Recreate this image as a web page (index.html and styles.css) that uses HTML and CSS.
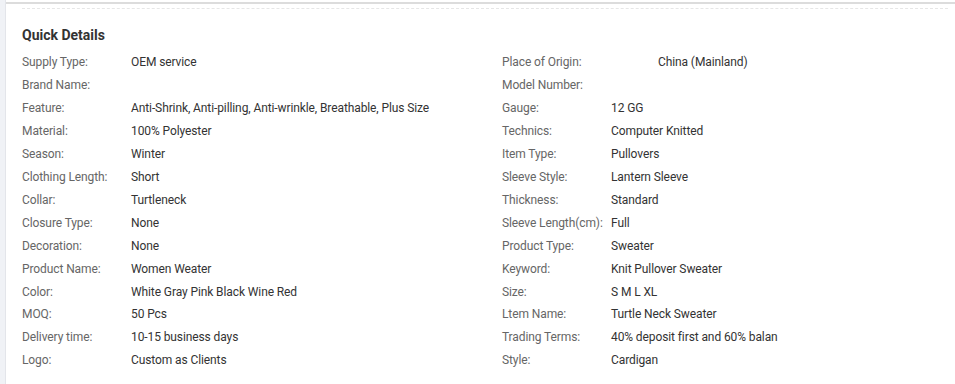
FILE: index.html
```html
<!DOCTYPE html>
<html>
<head>
<meta charset="utf-8">
<link rel="stylesheet" href="styles.css">
</head>
<body>
<div class="panel">
  <div class="topbar"></div>
  <div class="content">
    <div class="dash"></div>
    <h2 class="title">Quick Details</h2>
    <div class="grid">
      <div class="col">
        <div class="row"><span class="lbl">Supply Type:</span><span class="val">OEM service</span></div>
        <div class="row"><span class="lbl">Brand Name:</span><span class="val"></span></div>
        <div class="row"><span class="lbl">Feature:</span><span class="val">Anti-Shrink, Anti-pilling, Anti-wrinkle, Breathable, Plus Size</span></div>
        <div class="row"><span class="lbl">Material:</span><span class="val">100% Polyester</span></div>
        <div class="row"><span class="lbl">Season:</span><span class="val">Winter</span></div>
        <div class="row"><span class="lbl">Clothing Length:</span><span class="val">Short</span></div>
        <div class="row"><span class="lbl">Collar:</span><span class="val">Turtleneck</span></div>
        <div class="row"><span class="lbl">Closure Type:</span><span class="val">None</span></div>
        <div class="row"><span class="lbl">Decoration:</span><span class="val">None</span></div>
        <div class="row"><span class="lbl">Product Name:</span><span class="val">Women Weater</span></div>
        <div class="row"><span class="lbl">Color:</span><span class="val">White Gray Pink Black Wine Red</span></div>
        <div class="row"><span class="lbl">MOQ:</span><span class="val">50 Pcs</span></div>
        <div class="row"><span class="lbl">Delivery time:</span><span class="val">10-15 business days</span></div>
        <div class="row"><span class="lbl">Logo:</span><span class="val">Custom as Clients</span></div>
      </div>
      <div class="col">
        <div class="row"><span class="lbl">Place of Origin:</span><span class="val shift">China (Mainland)</span></div>
        <div class="row"><span class="lbl">Model Number:</span><span class="val"></span></div>
        <div class="row"><span class="lbl">Gauge:</span><span class="val">12 GG</span></div>
        <div class="row"><span class="lbl">Technics:</span><span class="val">Computer Knitted</span></div>
        <div class="row"><span class="lbl">Item Type:</span><span class="val">Pullovers</span></div>
        <div class="row"><span class="lbl">Sleeve Style:</span><span class="val">Lantern Sleeve</span></div>
        <div class="row"><span class="lbl">Thickness:</span><span class="val">Standard</span></div>
        <div class="row"><span class="lbl">Sleeve Length(cm):</span><span class="val">Full</span></div>
        <div class="row"><span class="lbl">Product Type:</span><span class="val">Sweater</span></div>
        <div class="row"><span class="lbl">Keyword:</span><span class="val">Knit Pullover Sweater</span></div>
        <div class="row"><span class="lbl">Size:</span><span class="val">S M L XL</span></div>
        <div class="row"><span class="lbl">Ltem Name:</span><span class="val">Turtle Neck Sweater</span></div>
        <div class="row"><span class="lbl">Trading Terms:</span><span class="val">40% deposit first and 60% balan</span></div>
        <div class="row"><span class="lbl">Style:</span><span class="val">Cardigan</span></div>
      </div>
    </div>
  </div>
</div>
</body>
</html>
```
FILE: styles.css
```css
html, body {
  margin: 0;
  padding: 0;
  height: 100%;
}
body {
  background: #f0f2f6;
  font-family: Roboto, "Liberation Sans", Arial, sans-serif;
  font-size: 12px;
}
.panel {
  margin-left: 5px;
  min-height: 384px;
  background: #fff;
  border-left: 1px solid #e3e5ea;
  padding-top: 2px;
}
.topbar {
  height: 2px;
  background: #dcdcdc;
}
.content {
  padding: 4px 7px 0 16px;
}
.dash {
  height: 0;
  border-top: 1px dashed #e6e6e6;
}
.title {
  margin: 18px 0 8px 0;
  font-size: 14px;
  font-weight: bold;
  color: #333;
  line-height: 16px;
}
.grid {
  display: grid;
  grid-template-columns: 480px 1fr;
}
.row {
  display: flex;
  height: 22.92px;
  align-items: center;
  white-space: nowrap;
  letter-spacing: -0.1px;
}
.lbl {
  width: 109px;
  flex: none;
  color: #666;
}
.val {
  color: #333;
}
.shift {
  padding-left: 47px;
}
```
